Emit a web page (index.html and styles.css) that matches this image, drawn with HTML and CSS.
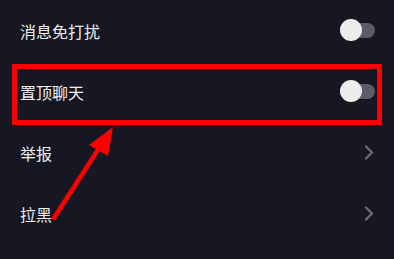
FILE: index.html
```html
<!DOCTYPE html>
<html lang="zh-CN">
<head>
    <meta charset="UTF-8">
    <meta name="viewport" content="width=device-width, initial-scale=1.0">
    <title>聊天设置</title>
    <link rel="stylesheet" href="styles.css">
</head>
<body>
<div class="settings">
    <div class="row">
        <span class="label">消息免打扰</span>
        <span class="toggle"><span class="knob"></span></span>
    </div>
    <div class="row">
        <span class="label">置顶聊天</span>
        <span class="toggle"><span class="knob"></span></span>
    </div>
    <div class="row">
        <span class="label">举报</span>
        <svg class="chevron" width="10" height="15" viewBox="0 0 10 15">
            <path d="M2 1.5 L8 7.5 L2 13.5" fill="none" stroke="#6a6b73" stroke-width="2.4" stroke-linecap="round" stroke-linejoin="round"/>
        </svg>
    </div>
    <div class="row">
        <span class="label">拉黑</span>
        <svg class="chevron" width="10" height="15" viewBox="0 0 10 15">
            <path d="M2 1.5 L8 7.5 L2 13.5" fill="none" stroke="#6a6b73" stroke-width="2.4" stroke-linecap="round" stroke-linejoin="round"/>
        </svg>
    </div>

    <!-- Markierung -->
    <div class="highlight"></div>
    <svg class="arrow" width="394" height="259" viewBox="0 0 394 259">
        <line x1="54" y1="218" x2="101" y2="145" stroke="#ff0000" stroke-width="4.5" stroke-linecap="round"/>
        <polygon points="113,127 89,145 108,156" fill="#ff0000"/>
    </svg>
</div>
</body>
</html>
```

FILE: styles.css
```css
body {
    margin: 0;
    background-color: #161722;
    font-family: "Noto Sans CJK SC", "Noto Sans", sans-serif;
}

.settings {
    position: relative;
    width: 394px;
    height: 259px;
    overflow: hidden;
}

.row {
    display: flex;
    align-items: center;
    justify-content: space-between;
    height: 61px;
    padding: 0 20px 0 20px;
}

.label {
    color: #ededef;
    font-size: 16px;
    letter-spacing: 0;
}

.toggle {
    position: relative;
    display: block;
    width: 35px;
    height: 15px;
    margin-right: -1px;
    border-radius: 8px;
    background-color: #5b5c64;
}

.knob {
    position: absolute;
    left: 0;
    top: -4px;
    width: 22px;
    height: 22px;
    border-radius: 50%;
    background-color: #ececec;
}

.chevron {
    display: block;
    margin-right: 0;
}

.highlight {
    position: absolute;
    left: 12px;
    top: 64px;
    width: 360px;
    height: 51px;
    border: 5px solid #ff0000;
}

.arrow {
    position: absolute;
    left: 0;
    top: 0;
}
```
